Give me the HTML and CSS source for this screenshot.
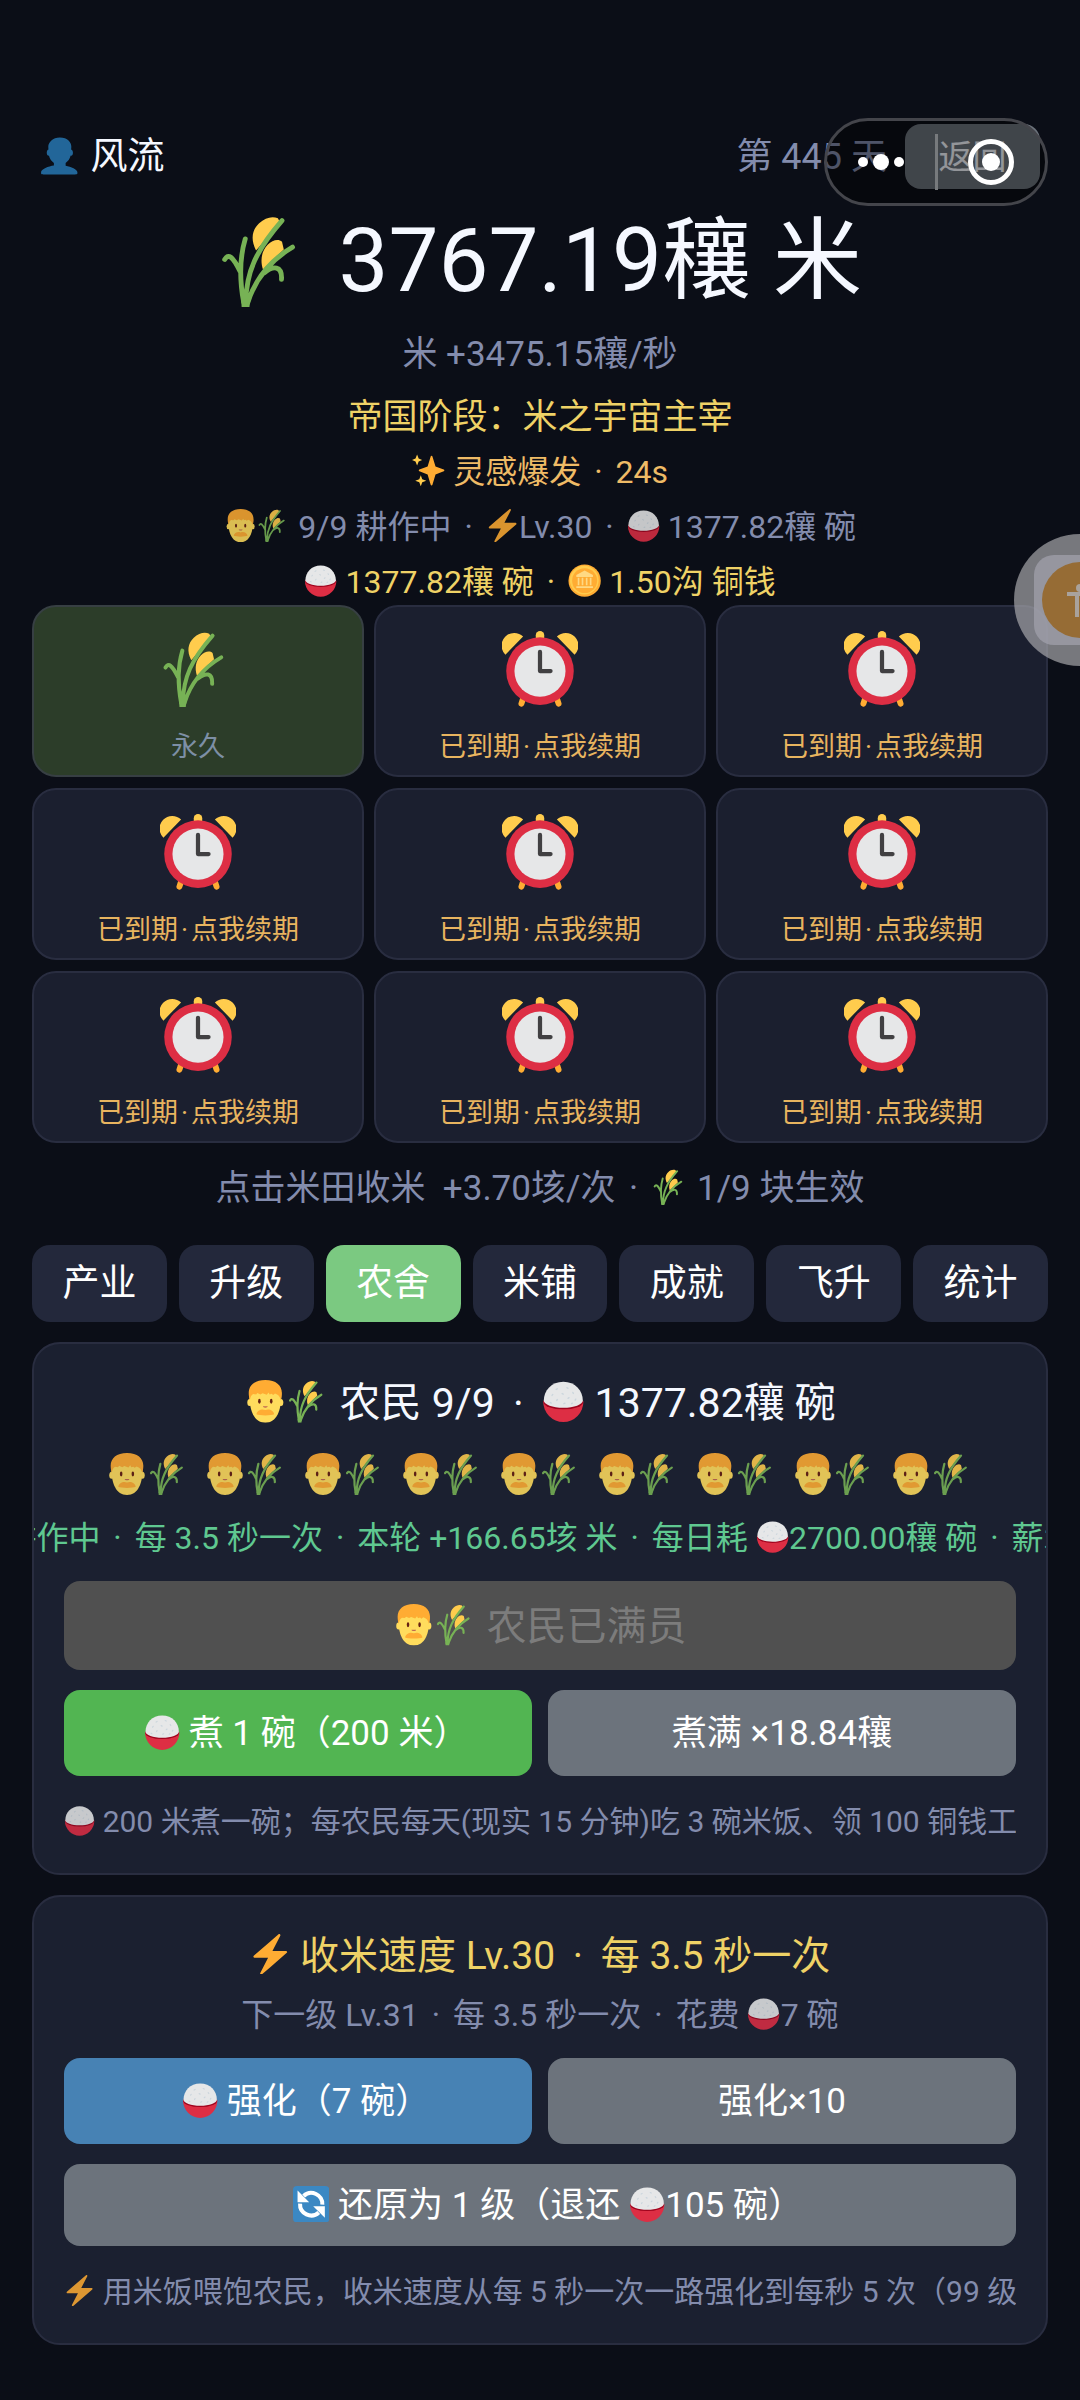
FILE: index.html
```html
<!DOCTYPE html>
<html lang="zh-CN">
<head>
<meta charset="utf-8">
<meta name="viewport" content="width=device-width, initial-scale=1">
<title>米田</title>
<link rel="stylesheet" href="styles.css">
</head>
<body>
<svg class="sprites" aria-hidden="true">
  <symbol id="user" viewBox="0 0 36 36"><path fill="#226699" d="M24 26.799v-2.566c2-1.348 4.08-3.779 4.703-6.896.186.103.206.17.413.17.991 0 1.709-1.287 1.709-2.873 0-1.562-.823-2.827-1.794-2.865.187-.674.293-1.577.293-2.735C29.324 5.168 26 .527 18.541.527c-6.629 0-10.777 4.641-10.777 8.507 0 1.123.069 2.043.188 2.755-.911.137-1.629 1.352-1.629 2.845 0 1.587.804 2.873 1.796 2.873.206 0 .025-.067.209-.17C8.952 20.453 11 22.885 13 24.232v2.414c-5 .645-12 3.437-12 6.23v1.061C1 35 2.076 35 3.137 35h29.725C33.924 35 35 35 35 33.938v-1.061c0-2.615-6-5.225-11-6.078z"/></symbol>
  <symbol id="wheat" viewBox="0 0 36 36">
    <path fill="#FFCC4D" d="M14.8 13.8C12.6 9.600 13.200 5.800 16 3.200 18.400.9 21.300.300 23.300 1.300L24.200 3zM17.500 21.200C16.300 17.500 17 14 19.300 11.600c1.900-2 4.300-2.400 5.600-1.200l.7 3z"/>
    <path fill="none" stroke="#77B255" stroke-width="1.900" stroke-linecap="round" d="M10 34C8.500 26 8 18 10.600 9.300M2.600 17.300C4 15 5.600 15.800 8.600 22M10.800 34C11 22 15 13.500 24.900 2.200M11.600 34C14.500 25 20.500 17.500 29 12.500M18 22.500C21.500 19.600 25 19.600 24.700 25"/>
    <path fill="#77B255" d="M9 33h3.600l-.4 3H9.200z"/>
  </symbol>
  <symbol id="clock" viewBox="0 0 36 36">
    <path fill="none" stroke="#FFAC33" stroke-width="2.800" stroke-linecap="round" d="M10 32l-.8 2.400M26 32l.8 2.400"/>
    <path fill="none" stroke="#FFCC4D" stroke-width="4" stroke-linecap="round" d="M18 2v3"/>
    <path fill="#FFCC4D" d="M1.600 11.200A6 6 0 0 1 10 2.600zM34.400 11.200A6 6 0 0 0 26 2.600z"/>
    <circle cx="18" cy="19" r="16" fill="#DD2E44"/><circle cx="18" cy="19" r="12.100" fill="#E6E7E8"/>
    <path fill="none" stroke="#414042" stroke-width="2" stroke-linecap="round" stroke-linejoin="round" d="M18 9.900V19h5"/>
  </symbol>
  <symbol id="man" viewBox="0 0 36 36">
    <ellipse cx="4.800" cy="19" rx="2" ry="3" fill="#FFDC5D"/><ellipse cx="31.200" cy="19" rx="2" ry="3" fill="#FFDC5D"/>
    <path fill="#FFDC5D" d="M4.500 12C4.500 5 10 2 18 2s13.500 3 13.500 10c0 14-4 24-13.500 24S4.500 26 4.500 12z"/>
    <path fill="#FFAC33" d="M18 0C9 0 4 4.500 4 11c0 2 .3 4.500 1 6 .3-2.500 1.200-4.300 2.700-5.200l2.600.4 1-1.200 2.600 1.200 1.800-1 3.500 1.300 1.600-2 .8 1.800 1.800-.6 1.200 1 1.600-1.200c2.700.7 4.300 2.800 4.800 5.500.7-1.500 1-4 1-6C32 4.500 27 0 18 0z"/>
    <path fill="#FFAC33" d="M18 25.300c3-1.300 7 .2 7.500 3.700-2 1.200-13 1.200-15 0 .5-3.500 4.500-5 7.500-3.700z"/>
    <ellipse cx="13" cy="18" rx="1.100" ry="2.100" fill="#662113"/><ellipse cx="23" cy="18" rx="1.100" ry="2.100" fill="#662113"/>
    <path fill="#C1694F" d="M16 22.200h4c.3 1.600-4.300 1.600-4 0z"/>
  </symbol>
  <symbol id="rice" viewBox="0 0 36 36">
    <path fill="#DD2E44" d="M1 18a17 17.500 0 0 0 34 0z"/>
    <ellipse cx="18" cy="18.500" rx="16.800" ry="6.300" fill="#A0041E"/>
    <path fill="#E6E7E8" d="M1.500 17.500C1.500 9 8 1.500 18 1.500s16.500 7.500 16.500 16c0 3-7.500 6-16.500 6s-16.500-3-16.500-6z"/>
    <path fill="none" stroke="#CCD6DD" stroke-width="1.200" stroke-linecap="round" d="M12 8l1-.6M21 6.500l1 .5M26 10.500l.5.900M17 11.500l.9.500M8.500 13l.6-.8M13 16.500l-.6.800M22 15.500l.8-.6M28 17l.5-.8M18.500 20l.9-.4M7 19l.8.500M25 20l.7-.4"/>
  </symbol>
  <symbol id="coin" viewBox="0 0 36 36">
    <circle cx="18" cy="18" r="17.500" fill="#FFAC33"/><circle cx="17.600" cy="17.400" r="15.600" fill="#FFCC4D"/><circle cx="18" cy="18" r="13.500" fill="#FFAC33"/>
    <path fill="#FFD983" d="M18 7l9 5v2H9v-2zM10.500 15h1.800v8h-1.800zM14.800 15h1.800v8h-1.800zM19.300 15h1.800v8h-1.800zM23.600 15h1.800v8h-1.800zM9 24h18v2H9z"/>
  </symbol>
  <symbol id="zap" viewBox="0 0 36 36"><path fill="#FFAC33" d="M32.938 15.651C32.792 15.260 32.418 15 32 15H19.925L26.890 1.458c.219-.426.106-.947-.271-1.243C26.437.071 26.218 0 26 0c-.233 0-.466.082-.653.243L18 6.588 3.347 19.243c-.316.273-.43.714-.284 1.105S3.582 21 4 21h12.075L9.110 34.542c-.219.426-.106.947.271 1.243.182.144.401.215.619.215.233 0 .466-.082.653-.243L18 29.412l14.653-12.655c.317-.273.43-.714.285-1.106z"/></symbol>
  <symbol id="sparkles" viewBox="0 0 36 36">
    <path fill="#FFAC33" d="M34.347 16.893l-8.899-3.294-3.323-10.891c-.128-.42-.517-.708-.956-.708-.439 0-.828.288-.956.708l-3.322 10.891-8.900 3.294c-.393.146-.653.519-.653.938 0 .418.26.793.653.938l8.895 3.293 3.324 11.223c.126.424.516.715.959.715.442 0 .833-.291.959-.716l3.324-11.223 8.896-3.293c.391-.144.652-.518.652-.937 0-.418-.261-.792-.653-.938z"/>
    <path fill="#FFCC4D" d="M5.500.500L7.200 4.800 11 6.500 7.200 8.200 5.500 12.500 3.800 8.200 0 6.500 3.800 4.800zM9.500 23l1.600 4.400 4.400 1.600-4.400 1.600L9.500 35l-1.600-4.400L3.500 29l4.400-1.600z"/>
  </symbol>
  <symbol id="refresh" viewBox="0 0 36 36">
    <rect width="36" height="36" rx="4" fill="#3B88C3"/>
    <path fill="none" stroke="#fff" stroke-width="4" d="M10.500 9.800A11 11 0 0 1 29 18.500M25.500 26.200A11 11 0 0 1 7 17.500"/>
    <path fill="#fff" d="M4.500 4.500V16H16zM31.500 31.500V20H20z"/>
  </symbol>
</svg>

<div class="page">
  <header class="topbar">
    <div class="player"><svg class="emoji"><use href="#user"/></svg>风流</div>
    <div class="day">第 445 天</div>
    <button class="back" type="button">返回</button>
    <div class="capsule">
      <button class="capsule-more" type="button" aria-label="更多"><svg viewBox="0 0 48 20"><circle cx="6" cy="10" r="5"/><circle cx="24" cy="10" r="8"/><circle cx="42" cy="10" r="5"/></svg></button>
      <button class="capsule-close" type="button" aria-label="关闭"><svg viewBox="0 0 46 46"><circle cx="23" cy="23" r="20.500" fill="none" stroke="#fff" stroke-width="5"/><circle cx="23" cy="23" r="9"/></svg></button>
    </div>
  </header>

  <section class="summary">
    <h1 class="amount"><svg class="emoji"><use href="#wheat"/></svg>3767.19穰 米</h1>
    <p class="rate">米 +3475.15穰/秒</p>
    <div class="status">
      <p class="stage">帝国阶段：米之宇宙主宰</p>
      <p class="burst"><svg class="emoji"><use href="#sparkles"/></svg> 灵感爆发 <span class="dot">·</span> 24s</p>
      <p class="work"><svg class="emoji"><use href="#man"/></svg><svg class="emoji"><use href="#wheat"/></svg> 9/9 耕作中 <span class="dot">·</span> <svg class="emoji"><use href="#zap"/></svg>Lv.30 <span class="dot">·</span> <svg class="emoji"><use href="#rice"/></svg> 1377.82穰 碗</p>
      <p class="wealth"><svg class="emoji"><use href="#rice"/></svg> 1377.82穰 碗 <span class="dot">·</span> <svg class="emoji"><use href="#coin"/></svg> 1.50沟 铜钱</p>
    </div>
  </section>

  <section class="fields">
    <button class="field active" type="button"><svg><use href="#wheat"/></svg><span>永久</span></button>
    <button class="field" type="button"><svg><use href="#clock"/></svg><span>已到期<span class="dot">·</span>点我续期</span></button>
    <button class="field" type="button"><svg><use href="#clock"/></svg><span>已到期<span class="dot">·</span>点我续期</span></button>
    <button class="field" type="button"><svg><use href="#clock"/></svg><span>已到期<span class="dot">·</span>点我续期</span></button>
    <button class="field" type="button"><svg><use href="#clock"/></svg><span>已到期<span class="dot">·</span>点我续期</span></button>
    <button class="field" type="button"><svg><use href="#clock"/></svg><span>已到期<span class="dot">·</span>点我续期</span></button>
    <button class="field" type="button"><svg><use href="#clock"/></svg><span>已到期<span class="dot">·</span>点我续期</span></button>
    <button class="field" type="button"><svg><use href="#clock"/></svg><span>已到期<span class="dot">·</span>点我续期</span></button>
    <button class="field" type="button"><svg><use href="#clock"/></svg><span>已到期<span class="dot">·</span>点我续期</span></button>
  </section>
  <p class="fields-note">点击米田收米&nbsp; +3.70垓/次 <span class="dot">·</span> <svg class="emoji"><use href="#wheat"/></svg> 1/9 块生效</p>

  <nav class="tabs">
    <button type="button">产业</button>
    <button type="button">升级</button>
    <button type="button" class="current" aria-current="page">农舍</button>
    <button type="button">米铺</button>
    <button type="button">成就</button>
    <button type="button">飞升</button>
    <button type="button">统计</button>
  </nav>

  <section class="panel">
    <h2 class="panel-title"><svg class="emoji"><use href="#man"/></svg><svg class="emoji"><use href="#wheat"/></svg> 农民 9/9 <span class="dot">·</span> <svg class="emoji"><use href="#rice"/></svg> 1377.82穰 碗</h2>
    <div class="farmers">
      <span><svg><use href="#man"/></svg><svg><use href="#wheat"/></svg></span>
      <span><svg><use href="#man"/></svg><svg><use href="#wheat"/></svg></span>
      <span><svg><use href="#man"/></svg><svg><use href="#wheat"/></svg></span>
      <span><svg><use href="#man"/></svg><svg><use href="#wheat"/></svg></span>
      <span><svg><use href="#man"/></svg><svg><use href="#wheat"/></svg></span>
      <span><svg><use href="#man"/></svg><svg><use href="#wheat"/></svg></span>
      <span><svg><use href="#man"/></svg><svg><use href="#wheat"/></svg></span>
      <span><svg><use href="#man"/></svg><svg><use href="#wheat"/></svg></span>
      <span><svg><use href="#man"/></svg><svg><use href="#wheat"/></svg></span>
    </div>
    <div class="ticker"><p>耕作中 <span class="dot">·</span> 每 3.5 秒一次 <span class="dot">·</span> 本轮 +166.65垓 米 <span class="dot">·</span> 每日耗 <svg class="emoji"><use href="#rice"/></svg>2700.00穰 碗 <span class="dot">·</span> 薪水</p></div>
    <button class="btn hire" type="button" disabled><svg class="emoji"><use href="#man"/></svg><svg class="emoji"><use href="#wheat"/></svg> 农民已满员</button>
    <div class="pair">
      <button class="btn green noted" type="button"><svg class="emoji"><use href="#rice"/></svg> 煮 1 碗（200 米）</button>
      <button class="btn" type="button">煮满 ×18.84穰</button>
    </div>
    <p class="hint"><svg class="emoji"><use href="#rice"/></svg> 200 米煮一碗；每农民每天(现实 15 分钟)吃 3 碗米饭、领 100 铜钱工资</p>
  </section>

  <section class="panel">
    <h2 class="panel-title speed"><svg class="emoji"><use href="#zap"/></svg> 收米速度 Lv.30 <span class="dot">·</span> 每 3.5 秒一次</h2>
    <p class="next">下一级 Lv.31 <span class="dot">·</span> 每 3.5 秒一次 <span class="dot">·</span> 花费 <svg class="emoji"><use href="#rice"/></svg>7 碗</p>
    <div class="pair">
      <button class="btn blue noted" type="button"><svg class="emoji"><use href="#rice"/></svg> 强化（7 碗）</button>
      <button class="btn" type="button">强化×10</button>
    </div>
    <button class="btn reset noted" type="button"><svg class="emoji"><use href="#refresh"/></svg> 还原为 1 级（退还 <svg class="emoji"><use href="#rice"/></svg>105 碗）</button>
    <p class="hint"><svg class="emoji"><use href="#zap"/></svg> 用米饭喂饱农民，收米速度从每 5 秒一次一路强化到每秒 5 次（99 级）</p>
  </section>

  <button class="assist" type="button" aria-label="辅助功能">
    <svg viewBox="0 0 132 132"><circle cx="66" cy="66" r="66" fill="#a5a5aa" fill-opacity=".7"/><rect x="20" y="21" width="92" height="90" rx="20" fill="#a0a0ab" fill-opacity=".75"/><circle cx="66" cy="66" r="38" fill="#966c35"/><circle cx="66" cy="54" r="4" fill="#a9a29c"/><path fill="none" stroke="#a9a29c" stroke-width="4" d="M53 60h26M63 60v23M69 60v23"/></svg>
  </button>
</div>
</body>
</html>
```
FILE: styles.css
```css
* { box-sizing: border-box; }

body {
  margin: 0;
  background: #0b0e17;
  color: #f5f8ff;
  font-family: Roboto, "Noto Sans CJK SC", sans-serif;
  font-size: 32px;
}

h1, h2, p { margin: 0; font-weight: 400; }

button {
  margin: 0;
  padding: 0;
  border: 0;
  background: none;
  color: inherit;
  font: inherit;
  line-height: 44px;
}

.sprites { position: absolute; width: 0; height: 0; }

.emoji {
  display: inline-block;
  width: 1.04em;
  height: 1.04em;
  vertical-align: -0.14em;
}

/* separator between inline facts */
.dot { margin: 0 5px; }

.page {
  position: relative;
  min-height: 100vh;
  padding: 124px 32px 56px;
  overflow: hidden;
}

/* top bar */
.topbar {
  position: relative;
  display: flex;
  align-items: center;
  height: 65px;
  padding: 0 8px;
}
.player { flex: 1; display: flex; align-items: center; gap: 12px; font-size: 37px; line-height: 60px; }
.day { color: #838cad; font-size: 36px; line-height: 60px; }
.back {
  width: 135px;
  height: 65px;
  margin-left: 18px;
  border-radius: 16px;
  background: #6c737c;
  font-size: 34px;
}
.capsule {
  position: absolute;
  top: -6px;
  right: 0;
  display: flex;
  align-items: center;
  width: 224px;
  height: 88px;
  border: 3px solid #44454b;
  border-radius: 44px;
  background: rgba(0, 0, 0, 0.4);
}
.capsule button { flex: 1; display: flex; align-items: center; justify-content: center; height: 56px; }
.capsule .capsule-close { border-left: 3px solid #777a7d; }
.capsule svg { fill: #fff; }
.capsule-more svg { width: 48px; height: 20px; }
.capsule-close svg { width: 46px; height: 46px; }

/* totals */
.summary { text-align: center; white-space: nowrap; }
.amount {
  display: flex;
  align-items: center;
  justify-content: center;
  gap: 28px;
  margin-top: 12px;
  font-size: 89px;
  line-height: 120px;
}
.rate { margin-top: 12px; color: #838cad; font-size: 35px; line-height: 44px; }
.status { display: grid; gap: 10px; margin-top: 18px; line-height: 45px; }
.stage { color: #efd266; font-size: 35px; }
.burst { color: #efbb66; }
.work { color: #838cad; }
.work .emoji, .next .emoji, .hint .emoji { opacity: 0.85; }
.wealth { color: #efd266; }

/* rice fields */
.fields { display: grid; grid-template-columns: repeat(3, 1fr); gap: 11px 10px; }
.field {
  display: flex;
  flex-direction: column;
  align-items: center;
  gap: 18px;
  height: 172px;
  padding-top: 24px;
  border: 2px solid #292d40;
  border-radius: 24px;
  background: #1b1f2f;
  color: #e8b45f;
  font-size: 27px;
}
.field svg { width: 76px; height: 76px; }
.field .dot { margin: 0 3px; }
.field.active { border-color: #373f43; background: #2c3d29; color: #7d8fa5; }
.fields-note {
  margin: 22px 0 32px;
  color: #838cad;
  font-size: 35px;
  line-height: 48px;
  text-align: center;
  white-space: nowrap;
}

.tabs { display: grid; grid-template-columns: repeat(7, 1fr); gap: 12px; }
.tabs button { height: 77px; border-radius: 18px; background: #23283b; color: #fff; font-size: 37px; }
.tabs .current { background: #7bc981; }

/* panels */
.panel {
  margin-top: 20px;
  padding: 31px 30px 29px;
  border: 2px solid #292d40;
  border-radius: 28px;
  background: #1b2030;
  overflow: hidden;
  white-space: nowrap;
}
.panel-title { font-size: 41px; line-height: 56px; text-align: center; }
.panel-title .dot { margin: 0 8px; }
.speed { color: #efd266; font-size: 39px; }

.farmers { display: flex; justify-content: center; gap: 14px; margin-top: 22px; opacity: 0.87; }
.farmers span { display: flex; }
.farmers svg { width: 42px; height: 42px; }

.ticker { display: flex; justify-content: center; margin: 20px -30px 0; color: #5fc890; line-height: 46px; }

.next { margin-top: 8px; color: #838cad; line-height: 46px; text-align: center; }

.pair { display: grid; grid-template-columns: 1fr 1fr; gap: 16px; margin-top: 20px; }
.btn { height: 86px; padding-top: 2px; border-radius: 16px; background: #6c737c; color: #fff; font-size: 35px; }
.green { background: #52b552; }
.blue { background: #4782b4; }
.hire { width: 100%; height: 89px; margin-top: 20px; background: #505050; color: #7c7c7c; font-size: 40px; }
.reset { width: 100%; height: 82px; margin-top: 20px; }
/* balances the blank half of the closing full-width bracket */
.noted { padding-left: 16px; }
.hint { margin-top: 24px; overflow: hidden; color: #838cad; font-size: 30px; line-height: 44px; }

/* floating assist button, half off the right edge */
.assist { position: absolute; top: 534px; right: -66px; width: 132px; height: 132px; }
.assist svg { display: block; }
```
